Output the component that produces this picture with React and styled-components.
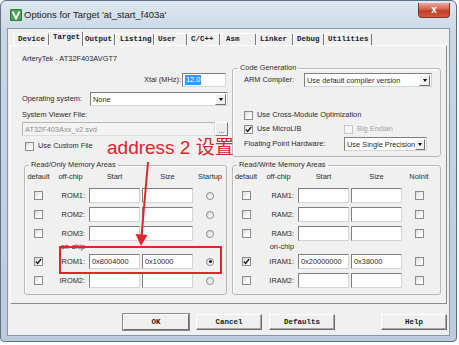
import styled, { createGlobalStyle } from 'styled-components';

const UI_FONT = '"Liberation Sans", Arial, sans-serif';
const MONO_FONT = '"Liberation Mono", "Courier New", monospace';

const GlobalStyle = createGlobalStyle`
  html, body {
    margin: 0;
    padding: 0;
    background: #fff;
  }
  body {
    font-family: ${UI_FONT};
  }
`;

const Window = styled.div`
  position: relative;
  box-sizing: border-box;
  width: 457px;
  height: 342px;
  display: flex;
  flex-direction: column;
  padding: 0 6px 5px 6px;
  border: 1px solid #5f7287;
  border-radius: 6px 6px 4px 4px;
  background: linear-gradient(180deg, #dde7f1 0%, #c9d7e5 10%, #bccbdb 100%);
`;

const TitleBar = styled.div`
  display: flex;
  align-items: center;
  height: 27px;
  padding-left: 3px;
`;

const AppIcon = styled.svg`
  width: 12px;
  height: 12px;
  flex: none;
`;

const Title = styled.span`
  margin-left: 2px;
  font-size: 9.5px;
  color: #1c1c1c;
`;

const CloseButton = styled.div`
  align-self: flex-start;
  margin-left: auto;
  margin-top: 2px;
  width: 32px;
  height: 15px;
  box-sizing: border-box;
  display: flex;
  align-items: center;
  justify-content: center;
  border: 1px solid #7c3426;
  border-top: none;
  border-radius: 0 0 4px 4px;
  background: linear-gradient(180deg, #e9a899 0%, #d4634d 45%, #c23d25 55%, #cf5b3f 100%);
  color: #fff;
  font-size: 10px;
  font-weight: bold;
  line-height: 1;
`;

const Client = styled.div`
  flex: 1;
  display: flex;
  flex-direction: column;
  padding: 2px 2px 0 2px;
  background: #f0f0f0;
  border: 1px solid #8797aa;
`;

const TabStrip = styled.div`
  display: flex;
  align-items: flex-end;
  height: 14px;
  padding-left: 3px;
`;

const Tab = styled.div`
  position: relative;
  box-sizing: border-box;
  width: ${p => p.$w}px;
  height: ${p => (p.$active ? 15 : 12)}px;
  margin-bottom: ${p => (p.$active ? -1 : 0)}px;
  padding-left: ${p => p.$pad ?? 3}px;
  z-index: ${p => (p.$active ? 1 : 0)};
  background: #f0f0f0;
  border-top: 1px solid #fff;
  border-left: 1px solid #fff;
  border-right: 1px solid #777;
  border-radius: 2px 2px 0 0;
  font-family: ${MONO_FONT};
  font-weight: bold;
  font-size: 7.5px;
  line-height: 10px;
  color: #222;
  white-space: pre;
`;

const Panel = styled.div`
  box-sizing: border-box;
  padding: 9px 6px 8px 11px;
  border: 1px solid;
  border-color: #fff #8c8c8c #8c8c8c #fff;
  font-size: 7.4px;
  color: #2a2a2a;
`;

const DeviceName = styled.div`
  height: 8px;
  line-height: 8px;
`;

const TopGrid = styled.div`
  display: grid;
  grid-template-columns: 206px 209px;
  column-gap: 4px;
`;

const LeftCol = styled.div`
  display: flex;
  flex-direction: column;
  padding-top: 10px;
`;

const FormRow = styled.div`
  display: flex;
  align-items: center;
  justify-content: ${p => (p.$end ? 'flex-end' : 'flex-start')};
  gap: ${p => p.$gap ?? 0}px;
  height: ${p => p.$h ?? 14}px;
  margin-top: ${p => p.$top ?? 0}px;
  padding-left: ${p => p.$indent ?? 0}px;
  padding-right: ${p => p.$right ?? 0}px;
`;

const Label = styled.span`
  flex: none;
  width: ${p => (p.$w ? `${p.$w}px` : 'auto')};
  line-height: 10px;
  white-space: nowrap;
  color: ${p => (p.$disabled ? '#a3a3a3' : 'inherit')};
`;

const Field = styled.div`
  box-sizing: border-box;
  display: flex;
  align-items: center;
  width: ${p => (p.$w ? `${p.$w}px` : 'auto')};
  flex: ${p => (p.$grow ? 1 : 'none')};
  height: ${p => p.$h ?? 15}px;
  padding-left: 2px;
  background: ${p => (p.$disabled ? '#f3f3f3' : '#fff')};
  border: 1px solid;
  border-color: ${p => (p.$disabled ? '#b5b5b5 #dcdcdc #dcdcdc #b5b5b5' : '#7f7f7f #d4d4d4 #d4d4d4 #7f7f7f')};
  color: ${p => (p.$disabled ? '#8d8d8d' : '#2a2a2a')};
  white-space: nowrap;
  overflow: hidden;
`;

const Selection = styled.span`
  background: #3399ff;
  color: #fff;
  padding: 0 1px;
  line-height: 10px;
`;

const SelectBox = styled(Field)`
  padding-right: 1px;
`;

const DropButton = styled.span`
  box-sizing: border-box;
  margin-left: auto;
  width: 11px;
  height: 11px;
  display: flex;
  align-items: center;
  justify-content: center;
  background: #f0f0f0;
  border: 1px solid;
  border-color: #fff #6f6f6f #6f6f6f #fff;

  &::before {
    content: '';
    border-top: 3px solid #000;
    border-left: 2.5px solid transparent;
    border-right: 2.5px solid transparent;
  }
`;

const SmallButton = styled.div`
  box-sizing: border-box;
  width: 13px;
  height: 14px;
  display: flex;
  align-items: flex-end;
  justify-content: center;
  background: #ececec;
  border: 1px solid;
  border-color: #fff #7a7a7a #7a7a7a #fff;
  font-size: 7px;
  line-height: 9px;
`;

const Group = styled.fieldset`
  margin: 0;
  min-width: 0;
  padding: ${p => p.$pad ?? '0 0 6px 0'};
  border: 1px solid #b8b8b8;
  border-radius: 3px;
  box-shadow: inset 1px 1px 0 #fff;
`;

const Legend = styled.legend`
  margin-left: ${p => p.$shift ?? 4}px;
  padding: 0 2px;
  line-height: 10px;
  height: 10px;
`;

const CheckItem = styled.span`
  display: inline-flex;
  align-items: center;
  gap: 4px;
  width: ${p => (p.$w ? `${p.$w}px` : 'auto')};
  flex: none;
`;

const Box = styled.span`
  box-sizing: border-box;
  width: 9px;
  height: 9px;
  display: inline-flex;
  align-items: center;
  justify-content: center;
  flex: none;
  border: 1px solid ${p => (p.$disabled ? '#c8c8c8' : '#8b8b8b')};
  background: ${p => (p.$disabled ? '#f5f5f5' : 'linear-gradient(135deg, #dadada 0%, #f7f7f7 60%, #fff 100%)')};
`;

const RadioRing = styled.span`
  box-sizing: border-box;
  width: 8px;
  height: 8px;
  display: inline-flex;
  align-items: center;
  justify-content: center;
  border-radius: 50%;
  border: 1px solid #8b8b8b;
  background: linear-gradient(135deg, #dcdcdc, #fff);
`;

const RadioDot = styled.span`
  width: 3px;
  height: 3px;
  border-radius: 50%;
  background: #1a1a1a;
`;

const MemGrid = styled.div`
  display: grid;
  grid-template-columns: 203px 209px;
  column-gap: 5px;
  margin-top: 3px;
  padding-left: 2px;
`;

const MemRow = styled.div`
  display: grid;
  grid-template-columns: ${p => p.$cols};
  column-gap: 2px;
  align-items: center;
  height: ${p => p.$h ?? 15}px;
  margin-top: ${p => p.$top ?? 0}px;
  line-height: 10px;
`;

const Cell = styled.span`
  display: flex;
  justify-content: ${p => p.$align ?? 'center'};
  padding-right: ${p => (p.$align === 'flex-end' ? 2 : 0)}px;
  white-space: nowrap;
`;

const ButtonRow = styled.div`
  display: flex;
  justify-content: flex-end;
  gap: 7px;
  margin-top: 10px;
`;

const DialogButton = styled.div`
  box-sizing: border-box;
  width: 66px;
  height: 16px;
  margin-left: ${p => (p.$spaced ? 39 : 0)}px;
  display: flex;
  align-items: center;
  justify-content: center;
  background: #efefef;
  border: 1px solid;
  border-color: #fff #6a6a6a #6a6a6a #fff;
  box-shadow: ${p => (p.$default ? '0 0 0 1px #8a8a8a' : 'inset -1px -1px 0 #a8a8a8')};
  font-family: ${MONO_FONT};
  font-weight: bold;
  font-size: 7.5px;
  color: #222;
`;

const Overlay = styled.svg`
  position: absolute;
  left: -1px;
  top: -1px;
  width: 459px;
  height: 345px;
  pointer-events: none;
`;

const Note = styled.span`
  position: absolute;
  left: 106px;
  top: 137px;
  font-family: "Liberation Sans", "Noto Sans CJK SC", sans-serif;
  font-size: 19px;
  line-height: 19px;
  color: #d9262b;
  white-space: nowrap;
`;

function Checkbox({ checked, disabled }) {
  return (
    <Box $disabled={disabled}>
      {checked && (
        <svg width="7" height="7" viewBox="0 0 7 7">
          <path d="M0.8 3.4 L2.7 5.4 L6.2 1" fill="none" stroke="#1d1d1d" strokeWidth="1.4" />
        </svg>
      )}
    </Box>
  );
}

function Radio({ checked }) {
  return <RadioRing>{checked && <RadioDot />}</RadioRing>;
}

function Select({ w, children }) {
  return (
    <SelectBox $w={w} $h={14}>
      {children}
      <DropButton />
    </SelectBox>
  );
}

const tabs = [
  { name: 'Device', w: 36, pad: 4 },
  { name: 'Target', w: 34, active: true },
  { name: 'Output', w: 32, pad: 1 },
  { name: 'Listing', w: 39, pad: 4 },
  { name: 'User', w: 33 },
  { name: 'C/C++', w: 33 },
  { name: 'Asm', w: 36, pad: 5 },
  { name: 'Linker', w: 37 },
  { name: 'Debug', w: 31 },
  { name: 'Utilities', w: 48 },
];

const ROM_COLS = '27px 33px 51px 51px 30px';
const RAM_COLS = '26px 35px 51px 51px 30px';

const romRows = [
  { name: 'ROM1:', top: 6 },
  { name: 'ROM2:', top: 4 },
  { name: 'ROM3:', top: 4 },
  { chip: true },
  { name: 'IROM1:', top: 1, on: true, start: '0x8004000', size: '0x10000' },
  { name: 'IROM2:', top: 4 },
];

const ramRows = [
  { name: 'RAM1:', top: 6 },
  { name: 'RAM2:', top: 4 },
  { name: 'RAM3:', top: 4 },
  { chip: true },
  { name: 'IRAM1:', top: 1, on: true, start: '0x20000000', size: '0x38000' },
  { name: 'IRAM2:', top: 4 },
];

function MemoryArea({ title, cols, rows, lastHeader, rom }) {
  return (
    <Group>
      <Legend>{title}</Legend>
      <MemRow $cols={cols} $h={10} $top={2}>
        <Cell>default</Cell>
        <Cell>off-chip</Cell>
        <Cell>Start</Cell>
        <Cell>Size</Cell>
        <Cell>{lastHeader}</Cell>
      </MemRow>
      {rows.map((r, i) =>
        r.chip ? (
          <MemRow key={i} $cols={cols} $h={12}>
            <span />
            <Cell $align="flex-end">on-chip</Cell>
          </MemRow>
        ) : (
          <MemRow key={i} $cols={cols} $top={r.top}>
            <Cell><Checkbox checked={r.on} /></Cell>
            <Cell $align="flex-end">{r.name}</Cell>
            <Field>{r.start}</Field>
            <Field>{r.size}</Field>
            <Cell>{rom ? <Radio checked={r.on} /> : <Checkbox />}</Cell>
          </MemRow>
        )
      )}
    </Group>
  );
}

export default function App() {
  return (
    <>
      <GlobalStyle />
      <Window>
        <TitleBar>
          <AppIcon viewBox="0 0 12 12">
            <rect x="0" y="0" width="12" height="12" rx="1" fill="#2f7d3b" />
            <rect x="1" y="1" width="10" height="10" fill="#4aa050" />
            <path d="M2.5 2.5 L6 9.5 L9.5 2.5" fill="none" stroke="#fff" strokeWidth="1.8" />
          </AppIcon>
          <Title>Options for Target 'at_start_f403a'</Title>
          <CloseButton>x</CloseButton>
        </TitleBar>
        <Client>
          <TabStrip>
            {tabs.map(t => (
              <Tab key={t.name} $w={t.w} $pad={t.pad} $active={t.active}>
                {t.name}
              </Tab>
            ))}
          </TabStrip>
          <Panel>
            <DeviceName>ArteryTek - AT32F403AVGT7</DeviceName>
            <TopGrid>
              <LeftCol>
                <FormRow $end $gap={1} $right={2}>
                  <Label>Xtal (MHz):</Label>
                  <Field $w={44} $h={14}>
                    <Selection>12.0</Selection>
                  </Field>
                </FormRow>
                <FormRow $top={5}>
                  <Label $w={68}>Operating system:</Label>
                  <Select w={138}>None</Select>
                </FormRow>
                <FormRow $top={4} $h={10}>
                  <Label>System Viewer File:</Label>
                </FormRow>
                <FormRow $top={2}>
                  <Field $grow $disabled $h={14}>AT32F403Axx_v2.svd</Field>
                  <SmallButton>...</SmallButton>
                </FormRow>
                <FormRow $top={5} $h={10} $indent={3}>
                  <CheckItem>
                    <Checkbox />
                    <Label>Use Custom File</Label>
                  </CheckItem>
                </FormRow>
              </LeftCol>
              <Group $pad="0 7px 5px 11px">
                <Legend $shift={-6}>Code Generation</Legend>
                <FormRow>
                  <Label $w={60}>ARM Compiler:</Label>
                  <Select w={128}>Use default compiler version</Select>
                </FormRow>
                <FormRow $top={23} $h={10}>
                  <CheckItem>
                    <Checkbox />
                    <Label>Use Cross-Module Optimization</Label>
                  </CheckItem>
                </FormRow>
                <FormRow $top={4} $h={10}>
                  <CheckItem $w={100}>
                    <Checkbox checked />
                    <Label>Use MicroLIB</Label>
                  </CheckItem>
                  <CheckItem>
                    <Checkbox disabled />
                    <Label $disabled>Big Endian</Label>
                  </CheckItem>
                </FormRow>
                <FormRow $top={3}>
                  <Label $w={100}>Floating Point Hardware:</Label>
                  <Select w={83}>Use Single Precision</Select>
                </FormRow>
              </Group>
            </TopGrid>
            <MemGrid>
              <MemoryArea title="Read/Only Memory Areas" cols={ROM_COLS} rows={romRows} lastHeader="Startup" rom />
              <MemoryArea title="Read/Write Memory Areas" cols={RAM_COLS} rows={ramRows} lastHeader="NoInit" />
            </MemGrid>
          </Panel>
          <ButtonRow>
            <DialogButton $default>OK</DialogButton>
            <DialogButton>Cancel</DialogButton>
            <DialogButton>Defaults</DialogButton>
            <DialogButton $spaced>Help</DialogButton>
          </ButtonRow>
        </Client>
        <Note>address 2 设置</Note>
        <Overlay viewBox="0 0 459 345">
          <line x1="148" y1="162" x2="141.5" y2="236" stroke="#e0262b" strokeWidth="2" />
          <polygon points="135.5,234 147.5,235 141,246" fill="#e0262b" />
          <rect x="60" y="247" width="161" height="26" fill="none" stroke="#e0262b" strokeWidth="2" />
        </Overlay>
      </Window>
    </>
  );
}
